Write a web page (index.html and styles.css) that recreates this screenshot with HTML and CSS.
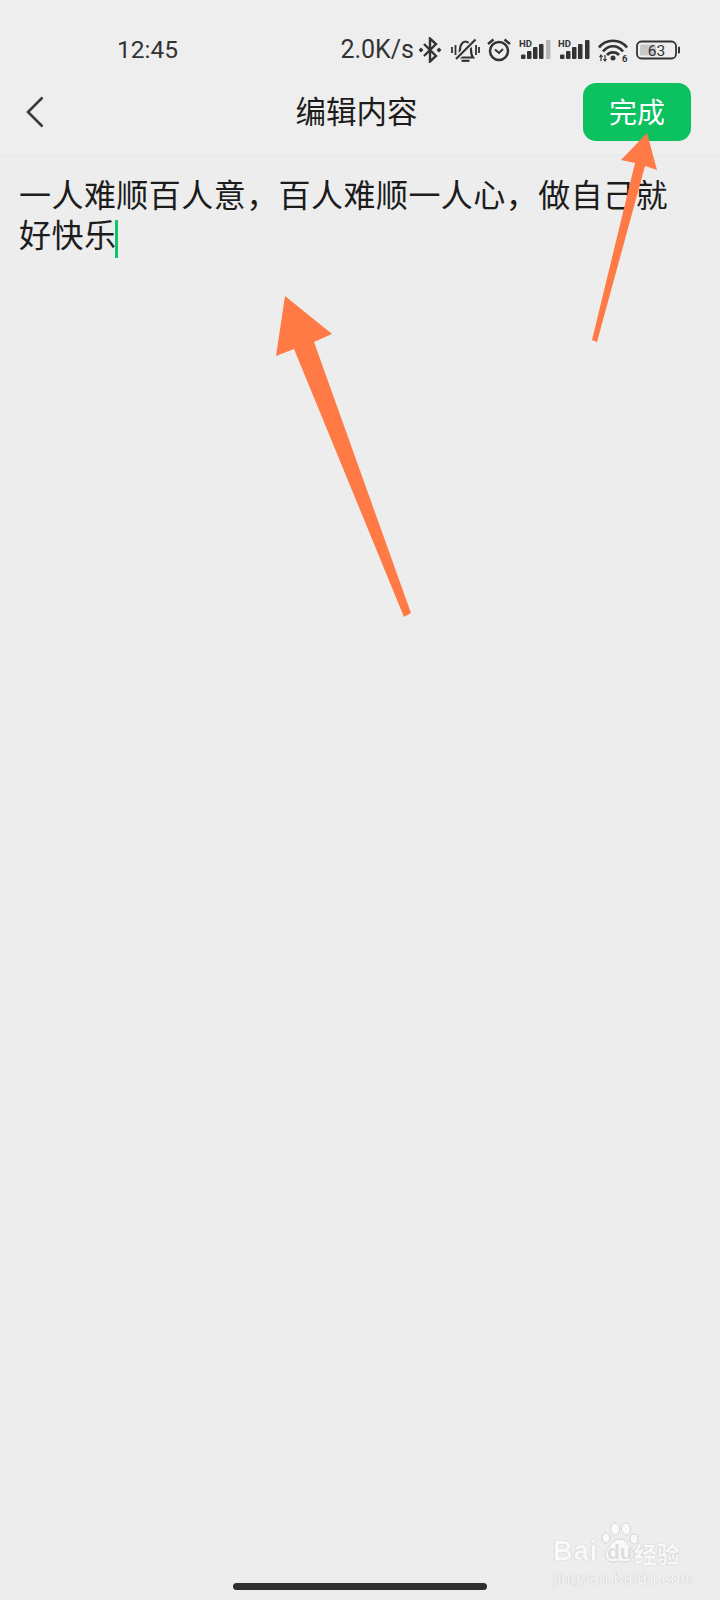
FILE: index.html
```html
<!DOCTYPE html>
<html lang="zh-CN">
<head>
<meta charset="utf-8">
<title>编辑内容</title>
<link rel="stylesheet" href="styles.css">
</head>
<body>
<div class="screen">
  <div class="status">
    <span class="time">12:45</span>
    <div class="status-right">
      <span class="speed">2.0K/s</span>
      <svg class="ico" width="24" height="26" viewBox="0 0 24 26"><path d="M5 7 17 19 11 24.500V1.500L17 7 5 19" fill="none" stroke="#333" stroke-width="2.400"/><path d="M2 10.500 4.500 13 2 15.500-.5 13ZM20 10.500 22.500 13 20 15.500 17.500 13Z" fill="#333"/></svg>
      <svg class="ico" width="29" height="26" viewBox="0 0 29 26"><path d="M7 20.500c1.500-2 2-4 2-8 0-4.500 2.500-8 5.500-8s5.500 3.500 5.500 8c0 4 .5 6 2 8Z" fill="none" stroke="#333" stroke-width="2.200"/><path d="M10.500 23.800h8" stroke="#333" stroke-width="2.200"/><path d="M5 22 25 2" stroke="#eee" stroke-width="5"/><path d="M5 22 24.500 2.500" stroke="#333" stroke-width="2.200"/><path d="M1 10v6M4.500 8v10M25 8v10M28 10v6" stroke="#333" stroke-width="1.800"/></svg>
      <svg class="ico" width="24" height="26" viewBox="0 0 24 26"><circle cx="12" cy="14" r="9" fill="none" stroke="#333" stroke-width="2.500"/><path d="M8 12.500l4 3.500 4-4" fill="none" stroke="#333" stroke-width="2"/><path d="M1 7l5.500-4.500M23 7l-5.500-4.500" stroke="#333" stroke-width="2.400"/></svg>
      <svg class="ico" width="32" height="26" viewBox="0 0 32 26"><text class="hd" x="0" y="10">HD</text><rect x="2" y="17.500" width="4.500" height="4.500" rx="1" fill="#333"/><rect x="8" y="14" width="4.500" height="8" rx="1" fill="#333"/><rect x="14" y="10" width="4.500" height="12" rx="1" fill="#333"/><rect x="20" y="7" width="4.500" height="15" rx="1" fill="#333"/><rect x="27" y="3" width="4.500" height="19" rx="1" fill="#b5b5b5"/></svg>
      <svg class="ico" width="32" height="26" viewBox="0 0 32 26"><text class="hd" x="0" y="10">HD</text><rect x="2" y="17.500" width="4.500" height="4.500" rx="1" fill="#333"/><rect x="8" y="14" width="4.500" height="8" rx="1" fill="#333"/><rect x="14" y="10" width="4.500" height="12" rx="1" fill="#333"/><rect x="20" y="7" width="4.500" height="15" rx="1" fill="#333"/><rect x="27" y="3" width="4.500" height="19" rx="1" fill="#333"/></svg>
      <svg class="ico" width="31" height="26" viewBox="0 0 31 26"><path d="M1 10.500C8 1.500 22 1.500 29 10.500M5 14.500C10.500 7.500 19.500 7.500 25 14.500M9 18C12 14.500 18 14.500 21 18" fill="none" stroke="#333" stroke-width="2.700"/><circle cx="15" cy="21" r="2.500" fill="#333"/><path d="M3 18v6M1.500 20l1.500-2 1.500 2M7 24v-6M5.500 22l1.500 2 1.500-2" fill="none" stroke="#333" stroke-width="1.200"/><text class="wifi6" x="24" y="25">6</text></svg>
      <svg class="ico" width="44" height="26" viewBox="0 0 44 26"><rect x="1" y="4.500" width="39" height="17" rx="4.500" fill="none" stroke="#333" stroke-width="1.800"/><rect x="4" y="7.500" width="16" height="11" rx="1.500" fill="#c9c9c9"/><text class="batt" x="20.500" y="18.500">63</text><rect x="42" y="9.500" width="2" height="7" rx="1" fill="#333"/></svg>
    </div>
  </div>

  <header class="bar">
    <svg class="back" width="20" height="34" viewBox="0 0 20 34"><path d="M17.500 2.500 3 17l14.500 14.500" fill="none" stroke="#3a3a3a" stroke-width="2.600"/></svg>
    <h1 class="title">编辑内容</h1>
    <button class="done">完成</button>
  </header>

  <main class="content">
    <p class="text">一人难顺百人意，百人难顺一人心，做自己就好快乐<span class="caret"></span></p>
  </main>

  <div class="home"></div>

  <svg class="arrows" width="720" height="1600" viewBox="0 0 720 1600">
    <path d="M285 296 332 334 314 342 411 613 404 617 294 349 276 356Z" fill="#ff7a45"/>
    <path d="M647 133 657 170 645 166 597 342 592 340 635 163 621 160Z" fill="#ff7a45"/>
  </svg>

  <div class="mark">
    <div class="mark-top">
      <span class="mark-bai">Bai</span>
      <div class="mark-paw">
        <svg width="38" height="44" viewBox="0 0 38 44"><g fill="#f9f9f9" stroke="#d4d4d4" stroke-width="1"><ellipse cx="5" cy="16" rx="4" ry="5"/><ellipse cx="14" cy="7" rx="4.500" ry="6"/><ellipse cx="25" cy="7" rx="4.500" ry="6"/><ellipse cx="33" cy="17" rx="4" ry="5"/><path d="M19 17c6 0 7 5 11 9 5 6 2 14-6 14-3 0-4-1-6-1s-4 1-6 1c-8 0-10-8-5-14 4-4 5-9 12-9Z"/></g></svg>
        <span class="mark-du">du</span>
      </div>
      <span class="mark-cn">经验</span>
    </div>
    <div class="mark-url">jingyan.baidu.com</div>
  </div>
</div>
</body>
</html>
```

FILE: styles.css
```css
* {
  box-sizing: border-box;
}

html,
body {
  margin: 0;
  padding: 0;
}

body {
  background: #ededed;
  font-family: "Noto Sans CJK SC", "Noto Sans", sans-serif;
}

.screen {
  position: relative;
  width: 720px;
  height: 1600px;
  overflow: hidden;
  display: flex;
  flex-direction: column;
  background: #ededed;
}

.status {
  height: 75px;
  padding: 25px 40px 0 117px;
  display: flex;
  align-items: center;
  justify-content: space-between;
  background: #eeeeee;
  font-family: Roboto, "Liberation Sans", sans-serif;
  color: #333;
}

.time {
  font-size: 24.500px;
  line-height: 30px;
}

.status-right {
  display: flex;
  align-items: center;
  gap: 7.500px;
}

.speed {
  font-size: 25px;
  line-height: 30px;
  margin-right: -2.500px;
}

.ico {
  display: block;
  flex: none;
}

.hd {
  font-family: Roboto, sans-serif;
  font-size: 9.500px;
  font-weight: 700;
  fill: #333;
}

.wifi6 {
  font-family: Roboto, sans-serif;
  font-size: 9.500px;
  font-weight: 700;
  fill: #333;
}

.batt {
  font-family: Roboto, sans-serif;
  font-size: 15.500px;
  text-anchor: middle;
  fill: #333;
}

.bar {
  height: 81px;
  padding: 8px 29px 14px 25px;
  display: grid;
  grid-template-columns: 105px 1fr auto;
  align-items: center;
  background: #eeeeee;
  border-bottom: 1px solid #e9e9e9;
}

.back {
  display: block;
}

.title {
  margin: -4px 0 0;
  font-size: 30.500px;
  font-weight: 400;
  line-height: 40px;
  text-align: center;
  color: #1c1c1c;
}

.done {
  width: 108px;
  height: 58px;
  padding: 0 0 2px;
  border: 0;
  border-radius: 13px;
  background: #0cc160;
  color: #fff;
  font-family: inherit;
  font-size: 28px;
  line-height: 54px;
}

.content {
  flex: 1;
  padding: 18px 30px 0 19px;
}

.text {
  margin: 0;
  font-size: 32px;
  line-height: 39.500px;
  letter-spacing: 0.450px;
  color: #1c1c1c;
}

.caret {
  display: inline-block;
  width: 2.500px;
  height: 38px;
  margin: -2px 0 -4px -1px;
  vertical-align: middle;
  background: #12c469;
}

.home {
  flex: none;
  width: 254px;
  height: 7px;
  margin: 0 auto 10px;
  border-radius: 4px;
  background: #2e2e2e;
}

.arrows {
  position: absolute;
  left: 0;
  top: 0;
  pointer-events: none;
}

.mark {
  position: absolute;
  left: 553px;
  top: 1522px;
  width: 130px;
  font-family: "Liberation Sans", sans-serif;
  color: #f9f9f9;
  text-shadow: 0 0 1px #a8a8a8;
}

.mark-top {
  display: flex;
  align-items: flex-end;
  height: 44px;
}

.mark-bai {
  font-size: 27px;
  font-weight: 700;
  line-height: 30px;
  margin-bottom: 0;
  letter-spacing: 1px;
}

.mark-paw {
  position: relative;
  width: 38px;
  height: 44px;
  margin-left: 3px;
}

.mark-du {
  position: absolute;
  left: 6px;
  top: 18px;
  font-size: 21px;
  font-weight: 700;
  line-height: 24px;
  color: #dedede;
  text-shadow: none;
}

.mark-cn {
  font-family: "Noto Sans CJK SC", sans-serif;
  font-size: 23px;
  font-weight: 700;
  line-height: 26px;
  margin-left: -5px;
  white-space: nowrap;
}

.mark-url {
  margin-top: 3px;
  font-size: 16.500px;
  line-height: 18px;
  letter-spacing: 0.500px;
  white-space: nowrap;
}
```
